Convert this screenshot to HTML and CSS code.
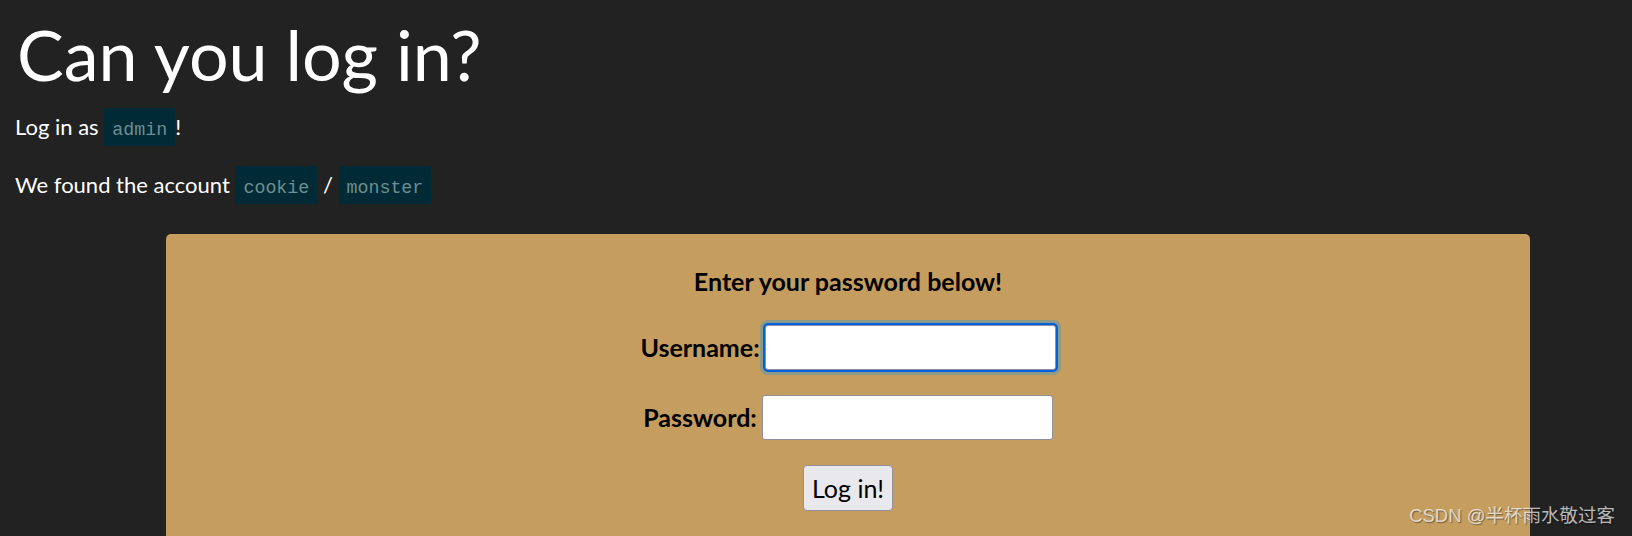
FILE: index.html
```html
<!DOCTYPE html>
<html lang="en">
<head>
  <meta charset="UTF-8" />
  <title>Can you log in?</title>
  <link rel="stylesheet" href="styles.css">
</head>
<body>

  <h1>Can you log in?</h1>
  <p>Log in as <code>admin</code>!</p>
  <p>We found the account <code>cookie</code> / <code>monster</code></p>

  <!-- Login box -->
  <div class="login-box">
    <h3>Enter your password below!</h3>
    <form class="login-form">
      <div class="row">
        <label for="username">Username:</label>
        <input type="text" id="username" class="focused" />
      </div>
      <div class="row">
        <label for="password">Password:</label>
        <input type="password" id="password" />
      </div>
      <div class="row">
        <button type="button">Log in!</button>
      </div>
    </form>
  </div>

  <div class="watermark">CSDN @半杯雨水敬过客</div>

</body>
</html>
```

FILE: styles.css
```css
* {
  margin: 0;
  padding: 0;
  box-sizing: border-box;
}

body {
  background: #222222;
  color: white;
  font-family: 'Lato', 'Noto Sans CJK SC', sans-serif;
  font-size: 22px;
  padding: 11px 0 0 15px;
  height: 536px;
  overflow: hidden;
  position: relative;
}

h1 {
  font-size: 70px;
  font-weight: 400;
  line-height: 86px;
  margin-bottom: 11px;
  padding-left: 2px;
}

p {
  line-height: 38px;
  margin-bottom: 20px;
}

code {
  display: inline-block;
  font-family: 'Liberation Mono', monospace;
  font-size: 18.3px;
  line-height: 22px;
  padding: 11px 8px 5px;
  background: #002b36;
  color: #6f8d8f;
}

.login-box {
  margin: 30px 0 0 151px;
  width: 1364px;
  height: 320px;
  background: #c49d5f;
  border-radius: 5px;
  padding-top: 32px;
  color: black;
  text-align: center;
}

.login-box h3 {
  font-size: 25px;
  font-weight: 700;
  line-height: 31px;
  margin-bottom: 28px;
}

.login-form {
  display: flex;
  flex-direction: column;
  gap: 25px;
}

.row {
  display: flex;
  justify-content: center;
  align-items: center;
  gap: 5px;
}

.row label {
  font-size: 25px;
  font-weight: 700;
  line-height: 31px;
}

.row input {
  width: 291px;
  height: 45px;
  border: 1px solid #8f8f9d;
  border-radius: 3px;
  background: white;
  font-family: 'Lato', sans-serif;
  font-size: 25px;
  padding: 0 8px;
}

.row input.focused {
  box-shadow: 0 0 0 2px #0060df, 0 0 0 5px #8d9a86;
}

.row button {
  height: 46px;
  padding: 0 8px;
  font-family: 'Lato', sans-serif;
  font-size: 25px;
  color: black;
  background: #e9e9ed;
  border: 1px solid #8f8f9d;
  border-radius: 4px;
}

.watermark {
  position: absolute;
  right: 17px;
  bottom: 9px;
  font-family: 'Liberation Sans', 'Noto Sans CJK SC', sans-serif;
  font-size: 18.5px;
  color: rgba(255, 255, 255, 0.7);
  text-shadow: 1px 1px 1px rgba(0, 0, 0, 0.4);
}
```
